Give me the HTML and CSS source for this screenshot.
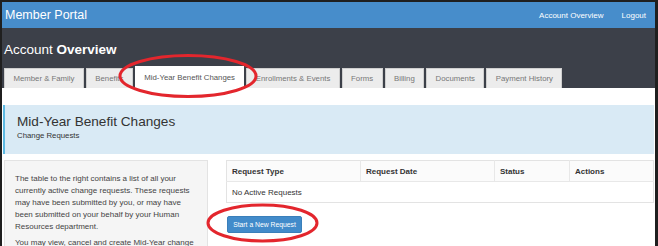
FILE: index.html
```html
<!DOCTYPE html>
<html>
<head>
<meta charset="utf-8">
<link rel="stylesheet" href="styles.css">
</head>
<body>
<div class="frame">
  <nav class="navbar">
    <div class="brand">Member Portal</div>
    <div class="navlinks">
      <span>Account Overview</span>
      <span>Logout</span>
    </div>
  </nav>
  <header class="header">
    <h1 class="page-title">Account <b>Overview</b></h1>
    <ul class="tabs">
      <li class="tab">Member &amp; Family</li>
      <li class="tab">Benefits</li>
      <li class="tab active">Mid-Year Benefit Changes</li>
      <li class="tab">Enrollments &amp; Events</li>
      <li class="tab">Forms</li>
      <li class="tab">Billing</li>
      <li class="tab">Documents</li>
      <li class="tab">Payment History</li>
    </ul>
  </header>
  <main class="content">
    <section class="jumbo">
      <h2 class="jumbo-title">Mid-Year Benefit Changes</h2>
      <div class="jumbo-sub">Change Requests</div>
    </section>
    <div class="row">
      <aside class="well">
        <p>The table to the right contains a list of all your currently active change requests. These requests may have been submitted by you, or may have been submitted on your behalf by your Human Resources department.</p>
        <p>You may view, cancel and create Mid-Year change requests from this page.</p>
      </aside>
      <div class="main-col">
        <table class="req-table">
          <thead>
            <tr><th class="c1">Request Type</th><th class="c2">Request Date</th><th class="c3">Status</th><th class="c4">Actions</th></tr>
          </thead>
          <tbody>
            <tr><td colspan="4">No Active Requests</td></tr>
          </tbody>
        </table>
        <button class="btn">Start a New Request</button>
      </div>
    </div>
  </main>
  <svg class="marks" width="658" height="246" viewBox="0 0 658 246">
    <ellipse cx="188" cy="76" rx="68" ry="20.5" fill="none" stroke="#e3262d" stroke-width="3"/>
    <ellipse cx="262.5" cy="223" rx="54.5" ry="18" fill="none" stroke="#e3262d" stroke-width="3"/>
  </svg>
</div>
</body>
</html>
```

FILE: styles.css
```css
* { box-sizing: border-box; }
html, body { margin: 0; padding: 0; }
body {
  width: 658px;
  height: 246px;
  overflow: hidden;
  background: #1f1f1f;
  font-family: "Liberation Sans", Arial, sans-serif;
}
.frame {
  position: relative;
  width: 658px;
  height: 246px;
  border-top: 2px solid #1f1f1f;
  border-left: 2px solid #1f1f1f;
  border-right: 3px solid #1f1f1f;
  background: #fff;
  overflow: hidden;
}
.navbar {
  height: 26px;
  background: #478dcb;
  color: #fff;
  display: flex;
  align-items: center;
  justify-content: space-between;
  padding: 0 9px 0 3px;
}
.brand { font-size: 12.5px; }
.navlinks { display: flex; gap: 18px; font-size: 8px; }
.header {
  background: #3c4049;
  height: 60px;
  display: flex;
  flex-direction: column;
  justify-content: space-between;
}
.page-title {
  margin: 14px 0 0 2px;
  font-size: 13.5px;
  font-weight: normal;
  color: #fff;
  line-height: 16px;
}
.page-title b { font-weight: bold; }
.tabs {
  list-style: none;
  margin: 0;
  padding: 0 0 0 2px;
  display: flex;
  align-items: flex-end;
  gap: 2px;
}
.tab {
  height: 20px;
  padding: 0 8.4px;
  background: #ececec;
  border: 1px solid #cfcfcf;
  border-bottom: none;
  color: #777;
  font-size: 7.8px;
  display: flex;
  align-items: center;
}
.tab.active {
  height: 22px;
  background: #fff;
  color: #555;
  border-color: #fff;
}
.content { padding: 17px 1px 0 1px; }
.jumbo {
  background: #d9eaf5;
  border-left: 2px solid #5cb9e2;
  height: 49px;
  padding: 9px 0 0 12px;
}
.jumbo-title {
  margin: 0;
  font-size: 13.6px;
  font-weight: normal;
  color: #333;
  line-height: 16px;
}
.jumbo-sub {
  font-size: 7.8px;
  color: #333;
  margin-top: 1px;
}
.row {
  display: flex;
  gap: 18px;
  margin-top: 6px;
  padding-left: 1px;
}
.well {
  width: 204px;
  flex: none;
  background: #f5f5f5;
  border: 1px solid #e3e3e3;
  padding: 12px 10px 0 10px;
  font-size: 8px;
  line-height: 12px;
  color: #444;
  height: 90px;
}
.well p { margin: 0 0 4px 0; }
.main-col { flex: 1; }
.req-table {
  width: 428px;
  border-collapse: collapse;
  border: 1px solid #e3e3e3;
  font-size: 8px;
  color: #333;
}
.req-table th {
  text-align: left;
  font-weight: bold;
  height: 21px;
  padding: 0 5px;
  background: #fbfbfb;
  border-bottom: 1px solid #e8e8e8;
  border-right: 1px solid #e8e8e8;
}
.req-table th.c4 { border-right: none; }
.req-table .c1 { width: 134px; }
.req-table .c2 { width: 134px; }
.req-table .c3 { width: 75px; }
.req-table td {
  height: 21px;
  padding: 0 5px;
}
.btn {
  margin-top: 13px;
  margin-left: 1px;
  width: 75px;
  height: 17px;
  background: #428bca;
  border: 1px solid #3a7fba;
  border-radius: 2px;
  color: #fff;
  font-family: "Liberation Sans", Arial, sans-serif;
  font-size: 6.8px;
  padding: 0;
}
.marks {
  position: absolute;
  left: -2px;
  top: -2px;
  pointer-events: none;
}
```
